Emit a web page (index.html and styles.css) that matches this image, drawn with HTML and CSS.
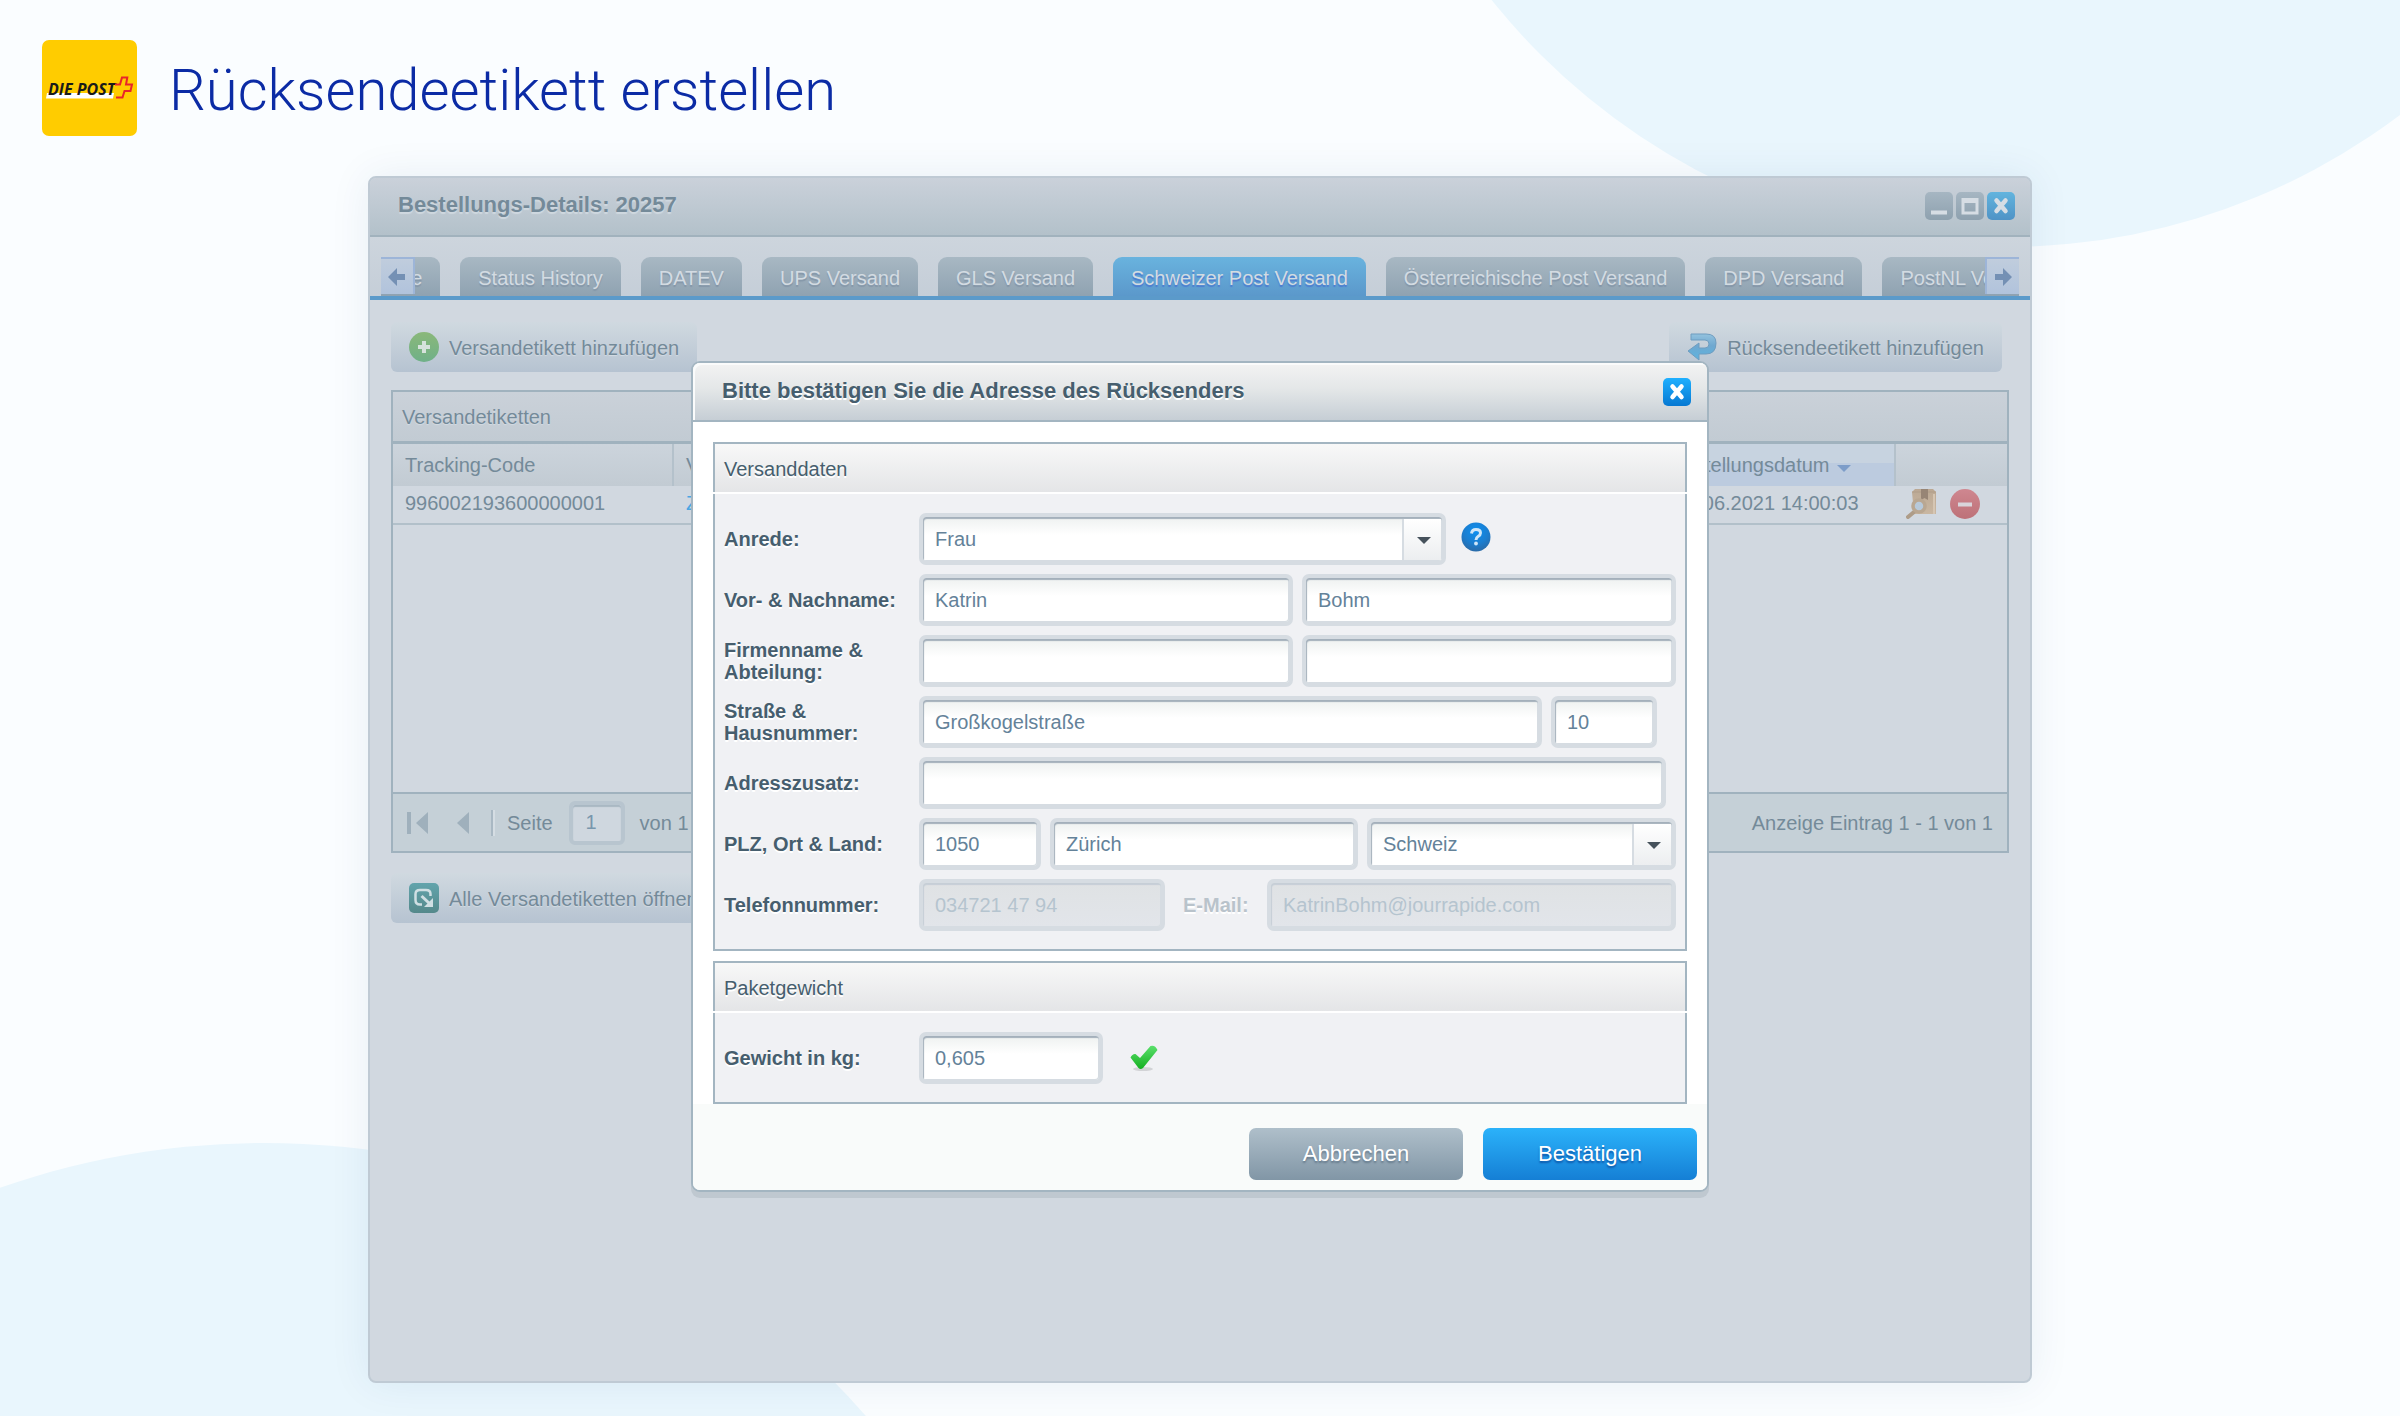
FILE: index.html
```html
<!DOCTYPE html>
<html lang="de">
<head>
<meta charset="utf-8">
<meta name="viewport" content="width=device-width, initial-scale=1">
<title>Rücksendeetikett erstellen</title>
<link rel="stylesheet" href="styles.css">
</head>
<body>
<svg width="0" height="0" class="defs" aria-hidden="true">
  <defs>
    <linearGradient id="g-green" x1="0" y1="0" x2="0" y2="1"><stop offset="0" stop-color="#8ab87a"/><stop offset="1" stop-color="#6fb088"/></linearGradient>
    <linearGradient id="g-red" x1="0" y1="0" x2="0" y2="1"><stop offset="0" stop-color="#cf8790"/><stop offset="1" stop-color="#bd7178"/></linearGradient>
    <linearGradient id="g-return" x1="0" y1="0" x2="0" y2="1"><stop offset="0" stop-color="#93c2de"/><stop offset="0.45" stop-color="#6fa8d0"/><stop offset="1" stop-color="#5cb4e0"/></linearGradient>
    <linearGradient id="g-teal" x1="0" y1="0" x2="0" y2="1"><stop offset="0" stop-color="#62a4ac"/><stop offset="1" stop-color="#55898b"/></linearGradient>
    <linearGradient id="g-check" x1="0" y1="0" x2="0" y2="1"><stop offset="0" stop-color="#5be06c"/><stop offset="1" stop-color="#15b021"/></linearGradient>
    <radialGradient id="g-help" cx="0.5" cy="0.3" r="0.7"><stop offset="0" stop-color="#0c8ff0"/><stop offset="0.6" stop-color="#1b7ed0"/><stop offset="1" stop-color="#2a6ba8"/></radialGradient>
    <linearGradient id="g-box" x1="0" y1="0" x2="0" y2="1"><stop offset="0" stop-color="#bba893"/><stop offset="1" stop-color="#c9b7a2"/></linearGradient>
  </defs>
</svg>
<div class="page">
  <div class="blob blob-top"></div>
  <div class="blob blob-bottom"></div>

  <header class="masthead">
    <svg class="logo" viewBox="0 0 95 96" role="img" aria-label="Die Post">
      <rect width="95" height="96" rx="7" fill="#ffcc00"/>
      <path d="M5 53H72L71 58.500H4Z" fill="#fff"/>
      <text x="6" y="55" class="logo-text">DIE POST</text>
      <path d="M74 57.500H80.500L82.500 51H88.500L90 44.500H84L85.300 37.500H80L78 44.500H73" fill="none" stroke="#e8242a" stroke-width="2"/>
    </svg>
    <h1>Rücksendeetikett erstellen</h1>
  </header>

  <main class="window">
    <div class="window-head">
      <h2>Bestellungs-Details: 20257</h2>
      <div class="window-tools">
        <button class="tool" aria-label="Minimieren"><svg viewBox="0 0 28 28"><path d="M6 20.500H22" stroke="#d6dde4" stroke-width="4"/></svg></button>
        <button class="tool" aria-label="Maximieren"><svg viewBox="0 0 28 28"><path d="M7 7.500V21H21V7.500Z" fill="none" stroke="#d6dde4" stroke-width="3"/><path d="M6 8.500H22" stroke="#d6dde4" stroke-width="5"/></svg></button>
        <button class="tool tool-close" aria-label="Schließen"><svg viewBox="0 0 28 28"><path d="M9.500 8.500L18.500 19M18.500 8.500L9.500 19" stroke="#d6dde4" stroke-width="4.500" stroke-linecap="round"/></svg></button>
      </div>
    </div>

    <nav class="tabbar" aria-label="Bereiche">
      <div class="tabclip">
        <ul class="tabs">
          <li><a href="#dokumente">Dokumente</a></li>
          <li><a href="#status">Status History</a></li>
          <li><a href="#datev">DATEV</a></li>
          <li><a href="#ups">UPS Versand</a></li>
          <li><a href="#gls">GLS Versand</a></li>
          <li><a href="#post" class="active" aria-current="page">Schweizer Post Versand</a></li>
          <li><a href="#at-post">Österreichische Post Versand</a></li>
          <li><a href="#dpd">DPD Versand</a></li>
          <li><a href="#postnl">PostNL Versand</a></li>
        </ul>
        <button class="scroll scroll-left" aria-label="Zurück"><svg viewBox="0 0 18 18"><path d="M0 9L9 0V6H17V12H9V18Z" fill="#7490b4"/></svg></button>
        <button class="scroll scroll-right" aria-label="Weiter"><svg viewBox="0 0 18 18"><path d="M18 9L9 0V6H1V12H9V18Z" fill="#7490b4"/></svg></button>
      </div>
    </nav>

    <div class="window-body">
      <div class="toolbar">
        <button class="action"><svg viewBox="0 0 30 30"><circle cx="15" cy="15" r="15" fill="url(#g-green)"/><path d="M15 9V21M9 15H21" stroke="#d6e2dc" stroke-width="4"/></svg><span>Versandetikett hinzufügen</span></button>
        <button class="action"><svg viewBox="0 0 30 30"><path d="M4 2H19Q29 2 29 11Q29 22 19 22H12V28L1 19L12 11V16H18Q22 16 22 12Q22 8 18 8H4Z" fill="url(#g-return)" stroke="#6f9dc0" stroke-width="1"/></svg><span>Rücksendeetikett hinzufügen</span></button>
      </div>

      <section class="grid-panel">
        <h3>Versandetiketten</h3>
        <table class="labels">
          <colgroup><col class="c-code"><col><col class="c-date"><col class="c-act"></colgroup>
          <thead>
            <tr><th>Tracking-Code</th><th>Versandetikett</th><th class="sorted">Erstellungsdatum <span class="sort"></span></th><th aria-label="Aktionen"></th></tr>
          </thead>
          <tbody>
            <tr>
              <td>996002193600000001</td>
              <td><a href="#etikett">Zeigen</a></td>
              <td>10.06.2021 14:00:03</td>
              <td>
                <div class="row-icons">
                  <button aria-label="Sendung verfolgen"><svg viewBox="0 0 30 30"><path d="M6 3L9 0H27L30 3V25H8Z" fill="url(#g-box)"/><path d="M6 3H30" stroke="#b09d89" stroke-width="1"/><path d="M15 0H22V11L18.500 9L15 11Z" fill="#978575"/><path d="M28 5V25" stroke="#d6c6b3" stroke-width="2"/><path d="M8 23L2 28" stroke="#ae9c88" stroke-width="4" stroke-linecap="round"/><circle cx="13" cy="17" r="6" fill="#b7c9da" stroke="#b9a792" stroke-width="3.500"/></svg></button>
                  <button aria-label="Löschen"><svg viewBox="0 0 30 30"><circle cx="15" cy="15" r="15" fill="url(#g-red)"/><path d="M8 15.500H22" stroke="#d9d4da" stroke-width="4"/></svg></button>
                </div>
              </td>
            </tr>
          </tbody>
        </table>
        <div class="pager">
          <button aria-label="Erste Seite"><svg width="22" height="22" viewBox="0 0 22 22"><path d="M0 0H4V22H0ZM21 0V22L9 11Z" fill="#9fb0bc"/></svg></button>
          <button class="prev" aria-label="Vorherige Seite"><svg width="12" height="22" viewBox="0 0 12 22"><path d="M12 0V22L0 11Z" fill="#9fb0bc"/></svg></button>
          <span class="sep"></span>
          <label for="page-no">Seite</label>
          <input id="page-no" class="page-no" type="text" value="1">
          <span>von 1</span>
          <span class="pager-info">Anzeige Eintrag 1 - 1 von 1</span>
        </div>
      </section>

      <div class="toolbar toolbar-bottom">
        <button class="action"><svg viewBox="0 0 30 30"><rect width="30" height="30" rx="5" fill="url(#g-teal)"/><path d="M13 21.500H11Q6.500 21.500 6.500 17V11Q6.500 7 11 7H17Q21.500 7 21.500 11V13" fill="none" stroke="#cfdfe3" stroke-width="2.500"/><path d="M12.500 13L20 20" stroke="#cfdfe3" stroke-width="3"/><path d="M24 15V24H15Z" fill="#cfdfe3"/></svg><span>Alle Versandetiketten öffnen</span></button>
      </div>
    </div>

    <div class="overlay">
      <form class="dialog" role="dialog" aria-labelledby="dialog-title">
        <div class="dialog-head">
          <h2 id="dialog-title">Bitte bestätigen Sie die Adresse des Rücksenders</h2>
          <button type="button" class="tool tool-bright" aria-label="Schließen"><svg viewBox="0 0 28 28"><path d="M9.500 8.500L18.500 19M18.500 8.500L9.500 19" stroke="#fff" stroke-width="4.500" stroke-linecap="round"/></svg></button>
        </div>

        <div class="dialog-body">
          <section class="group">
            <h3>Versanddaten</h3>
            <div class="group-body">
              <div class="row">
                <label for="anrede">Anrede:</label>
                <div class="fields">
                  <span class="combo combo-title"><select id="anrede" class="field"><option>Frau</option><option>Herr</option></select></span>
                  <button type="button" class="help" aria-label="Hilfe"><svg viewBox="0 0 30 30"><circle cx="15" cy="15" r="14.500" fill="url(#g-help)"/><path d="M10.500 11.500Q11 7.500 15 7.500Q19.500 7.500 19.500 11Q19.500 13 17 14.500Q15 15.700 15 18" fill="none" stroke="#cfe6f8" stroke-width="3"/><circle cx="15" cy="21.500" r="1.900" fill="#cfe6f8"/></svg></button>
                </div>
              </div>
              <div class="row">
                <label for="vorname">Vor- &amp; Nachname:</label>
                <div class="fields">
                  <input id="vorname" class="field grow" type="text" value="Katrin">
                  <input class="field grow" type="text" value="Bohm" aria-label="Nachname">
                </div>
              </div>
              <div class="row">
                <label for="firma">Firmenname &amp; Abteilung:</label>
                <div class="fields">
                  <input id="firma" class="field grow" type="text">
                  <input class="field grow" type="text" aria-label="Abteilung">
                </div>
              </div>
              <div class="row">
                <label for="strasse">Straße &amp; Hausnummer:</label>
                <div class="fields fields-street">
                  <input id="strasse" class="field grow" type="text" value="Großkogelstraße">
                  <input class="field w-number" type="text" value="10" aria-label="Hausnummer">
                </div>
              </div>
              <div class="row">
                <label for="zusatz">Adresszusatz:</label>
                <div class="fields fields-extra">
                  <input id="zusatz" class="field grow" type="text">
                </div>
              </div>
              <div class="row">
                <label for="plz">PLZ, Ort &amp; Land:</label>
                <div class="fields">
                  <input id="plz" class="field w-zip" type="text" value="1050">
                  <input class="field grow" type="text" value="Zürich" aria-label="Ort">
                  <span class="combo combo-country"><select class="field" aria-label="Land"><option>Schweiz</option><option>Österreich</option></select></span>
                </div>
              </div>
              <div class="row">
                <label for="telefon">Telefonnummer:</label>
                <div class="fields fields-contact">
                  <input id="telefon" class="field w-phone" type="tel" value="034721 47 94" disabled>
                  <label for="mail" class="muted">E-Mail:</label>
                  <input id="mail" class="field grow" type="email" value="KatrinBohm@jourrapide.com" disabled>
                </div>
              </div>
            </div>
          </section>

          <section class="group">
            <h3>Paketgewicht</h3>
            <div class="group-body">
              <div class="row">
                <label for="gewicht">Gewicht in kg:</label>
                <div class="fields">
                  <input id="gewicht" class="field w-weight" type="text" value="0,605">
                  <svg class="check" viewBox="0 0 28 28"><ellipse cx="13" cy="25" rx="10" ry="2" fill="#000" opacity="0.120"/><path d="M0.500 13.500Q2.500 9.500 5.500 10L10 14L20.500 2Q25 0.500 27.500 6L13 24Q10.500 26 8.500 24Z" fill="url(#g-check)"/></svg>
                </div>
              </div>
            </div>
          </section>
        </div>

        <div class="dialog-foot">
          <button type="button" class="btn btn-grey">Abbrechen</button>
          <button type="submit" class="btn btn-blue">Bestätigen</button>
        </div>
      </form>
    </div>
  </main>
</div>
</body>
</html>
```
FILE: styles.css
```css
* { box-sizing: border-box; }

body {
  margin: 0;
  background: #fafdff;
  color: #748a99;
  font: 20px/22px "Liberation Sans", Arial, sans-serif;
}

h1, h2, h3, ul { margin: 0; padding: 0; font-weight: normal; }

h3 { font-size: 20px; line-height: 22px; }

button {
  margin: 0;
  padding: 0;
  border: 0;
  background: none;
  color: inherit;
  font: inherit;
}

button svg { display: block; }

.defs { position: absolute; }

.page {
  position: relative;
  display: flex;
  flex-direction: column;
  min-height: 100vh;
  padding-bottom: 33px;
  overflow: hidden;
}

/* decorative background circles */
.blob {
  position: absolute;
  border-radius: 50%;
  background: #e9f6fd;
}

.blob-top { top: -1067px; right: -262px; width: 1314px; height: 1314px; }
.blob-bottom { bottom: -1327px; left: -536px; width: 1600px; height: 1600px; }

.masthead {
  position: relative;
  display: flex;
  align-items: center;
  gap: 32px;
  padding: 40px 42px;
}

.logo { width: 95px; height: 96px; }

.logo-text {
  font: italic bold 16px "Open Sans", sans-serif;
  fill: #1a1a1a;
}

h1 {
  padding-top: 4px;
  color: #0b2ba5;
  font: 300 58px/92px Roboto, sans-serif;
}

/* window */
.window {
  position: relative;
  flex: 1;
  display: flex;
  flex-direction: column;
  margin: 0 368px;
  border: 2px solid #bfcad4;
  border-radius: 8px;
  background: #d1d8e0;
  box-shadow: 0 0 40px rgba(30, 70, 110, 0.08);
}

.window-head {
  display: flex;
  align-items: center;
  justify-content: space-between;
  height: 59px;
  padding: 0 15px 2px 28px;
  border-bottom: 2px solid #a1b2bd;
  border-radius: 6px 6px 0 0;
  background: linear-gradient(#cad1da, #b3c1ca);
}

.window-head h2, .dialog-head h2 {
  padding-bottom: 2px;
  font-size: 22px;
  font-weight: bold;
  line-height: 26px;
}

.window-head h2 { text-shadow: 0 2px 1px #d0d9e0; }

.window-tools { display: flex; gap: 3px; }

.tool {
  width: 28px;
  height: 28px;
  border-radius: 5px;
  background: linear-gradient(#a6b6c2, #8ea1af);
}

.tool-close { background: linear-gradient(#62b4de, #4f93c6); }
.tool-bright { background: linear-gradient(#1fb0ff, #0678d2); }

.tabbar {
  padding: 20px 11px 0;
  border-bottom: 4px solid #5b9aca;
  background: linear-gradient(#cdd5dd, #c5ced8);
}

.tabclip { position: relative; overflow: hidden; }

.tabs {
  display: flex;
  gap: 20px;
  margin-left: -79px;
  list-style: none;
}

.tabs a {
  display: block;
  height: 39px;
  padding: 10px 18px 0;
  border-radius: 9px 9px 0 0;
  background: linear-gradient(#a8b8c3, #8fa2b1);
  color: #d3dbe2;
  text-decoration: none;
  text-shadow: 0 2px 1px #8496a8;
  white-space: nowrap;
}

.tabs .active {
  background: linear-gradient(#69b3de, #5b98cb);
  text-shadow: 0 2px 1px #4c7bd0;
}

.scroll {
  position: absolute;
  top: 0;
  display: flex;
  align-items: center;
  justify-content: center;
  width: 34px;
  height: 37px;
  border-top: 2px solid #9db5d8;
  background: linear-gradient(#c0cddd, #b1c3dc);
}

.scroll svg { width: 18px; height: 18px; }
.scroll-left { left: 0; border-right: 2px solid #9db5d8; }
.scroll-right { right: 0; border-left: 2px solid #9db5d8; }

.window-body { padding: 22px 21px; }

.toolbar { display: flex; justify-content: space-between; padding-right: 7px; }
.toolbar-bottom { padding-top: 20px; }

.action {
  display: flex;
  align-items: center;
  gap: 10px;
  height: 50px;
  padding: 0 18px;
  border-radius: 6px;
  background: linear-gradient(#d0d9e0, #b6c3d1);
  text-shadow: 0 1px 1px #d5dde4;
}

.action span { padding-top: 2px; }
.action svg { width: 30px; height: 30px; }

.grid-panel {
  margin-top: 18px;
  border: 2px solid #a0b2be;
}

.grid-panel h3 {
  height: 52px;
  padding: 14px 9px;
  border-bottom: 3px solid #a0b2be;
  background: linear-gradient(#cad1d9, #c2cbd3);
  text-shadow: 0 1px 1px #d5dde4;
}

.labels {
  width: 100%;
  table-layout: fixed;
  border-spacing: 0;
}

.c-code { width: 281px; }
.c-date { width: 233px; }
.c-act { width: 111px; }

.labels th {
  height: 42px;
  padding: 0 12px;
  border-right: 2px solid #b4c1cb;
  background: linear-gradient(#ccd4dc, #c2cbd3);
  font-weight: normal;
  text-align: left;
}

.labels th:last-child { border-right: 0; }
.labels .sorted { background: linear-gradient(#c7d3e0 45%, #bccbdf 45%); }

.sort {
  display: inline-block;
  margin-left: 2px;
  border: 7px solid transparent;
  border-top-color: #7d9dc9;
  border-bottom: 0;
}

.labels td {
  height: 39px;
  padding: 0 0 3px 12px;
  border-bottom: 2px solid #b2c0ca;
}

.labels td:last-child { padding-left: 10px; }
.labels a { color: #4ba6e2; text-decoration: none; }

.row-icons { display: flex; gap: 14px; padding-top: 2px; }
.row-icons svg { width: 30px; height: 30px; }

.pager {
  display: flex;
  align-items: center;
  height: 59px;
  margin-top: 267px;
  padding: 0 14px;
  border-top: 2px solid #a0b2be;
  background: #c5d0d7;
}

.prev { margin-left: 28px; }

.sep {
  width: 4px;
  height: 26px;
  margin: 0 12px 0 22px;
  border-left: 2px solid #a9b8c3;
  border-right: 2px solid #d5dde3;
}

.page-no {
  width: 56px;
  height: 44px;
  margin: 0 15px 0 16px;
  padding: 0 13px;
  border: 4px solid #b8c5cf;
  border-radius: 6px;
  background: #cfd7df;
  box-shadow: inset 0 2px 1px #a9b8c3;
  color: #7896ad;
  font: inherit;
}

.pager-info { margin-left: auto; }

/* dialog */
.overlay {
  position: absolute;
  inset: 0;
  display: flex;
  align-items: flex-start;
  justify-content: center;
  padding-top: 183px;
}

.dialog {
  width: 100%;
  max-width: 1018px;
  border: 2px solid #a3b5c1;
  border-radius: 9px;
  background: #fff;
  box-shadow: 0 6px 0 #bfc8d0;
  color: #465e6e;
}

.dialog-head {
  display: flex;
  align-items: center;
  justify-content: space-between;
  height: 59px;
  padding: 0 16px 0 29px;
  border-bottom: 2px solid #a3b5c1;
  border-radius: 7px 7px 0 0;
  background: linear-gradient(#f3f3f3, #e4e7e8 45%, #c6ced5);
  box-shadow: inset 2px 2px 0 #fafbfb;
}

.dialog-head h2 { text-shadow: 0 2px 0 #fff; }

.dialog-body {
  display: flex;
  flex-direction: column;
  gap: 10px;
  padding: 20px 20px 0;
}

.group h3 {
  height: 50px;
  margin-bottom: 2px;
  padding: 14px 9px;
  border: 2px solid #a3b5c1;
  border-bottom: 0;
  background: linear-gradient(#f8f8f8, #e4e5e7);
  text-shadow: 0 2px 0 #fff;
}

.group-body {
  display: flex;
  flex-direction: column;
  gap: 9px;
  padding: 19px 9px 18px;
  border: 2px solid #a3b5c1;
  border-top: 0;
  background: #f0f1f4;
}

.row {
  display: grid;
  grid-template-columns: 195px 1fr;
  align-items: center;
}

.row label { font-weight: bold; text-shadow: 0 2px 0 #fff; }
.row > label { padding-right: 16px; }

.fields { display: flex; align-items: center; gap: 9px; }
.fields-street { padding-right: 19px; }
.fields-extra { padding-right: 10px; }
.fields-contact { gap: 18px; }

.row .muted { width: 66px; color: #b9c3cb; }

.field {
  width: 100%;
  min-width: 0;
  height: 52px;
  padding: 0 12px;
  border: 4px solid #d6dce2;
  border-radius: 7px;
  background: linear-gradient(#eef1f0, #fff 18px) padding-box, #d6dce2;
  box-shadow: inset 1px 2px 1px #a4b0bb, inset -1px -1px 0 #d6dce2;
  color: #648299;
  font: inherit;
  appearance: none;
}

.field:disabled {
  background: linear-gradient(#dfe2e4, #e2e5ea) padding-box, #d6dce2;
  box-shadow: inset 1px 2px 1px #c6ced6, inset -1px -1px 0 #d6dce2;
  color: #b5c4cf;
  opacity: 1;
}

.grow { flex: 1; }
.w-number { width: 106px; }
.w-zip { width: 122px; }
.w-phone { width: 246px; }
.w-weight { width: 184px; }

.combo { position: relative; display: block; }
.combo-title { width: 527px; }
.combo-country { width: 309px; }

/* drop-down trigger drawn over the right end of the select */
.combo::before {
  content: "";
  position: absolute;
  top: 6px;
  right: 5px;
  width: 37px;
  height: 41px;
  border-left: 2px solid #d6dce2;
  background: linear-gradient(#fff, #eceef0);
  pointer-events: none;
}

.combo::after {
  content: "";
  position: absolute;
  top: 24px;
  right: 15px;
  border: 7px solid transparent;
  border-top-color: #46525c;
  border-bottom: 0;
  pointer-events: none;
}

.help { margin: 0 0 4px 6px; }
.help svg { width: 30px; height: 30px; }
.check { width: 28px; height: 28px; margin-left: 18px; }

.dialog-foot {
  display: flex;
  justify-content: flex-end;
  gap: 20px;
  padding: 24px 10px 10px;
  border-radius: 0 0 7px 7px;
  background: #f9fbfa;
}

.btn {
  width: 214px;
  height: 52px;
  border-radius: 7px;
  color: #fff;
  font-size: 22px;
}

.btn-grey {
  background: linear-gradient(#afbfca, #8196a6);
  text-shadow: 0 2px 2px #63788a;
}

.btn-blue {
  background: linear-gradient(#2bb2fa, #157fd5);
  text-shadow: 0 2px 2px #0c55a8;
}
```
